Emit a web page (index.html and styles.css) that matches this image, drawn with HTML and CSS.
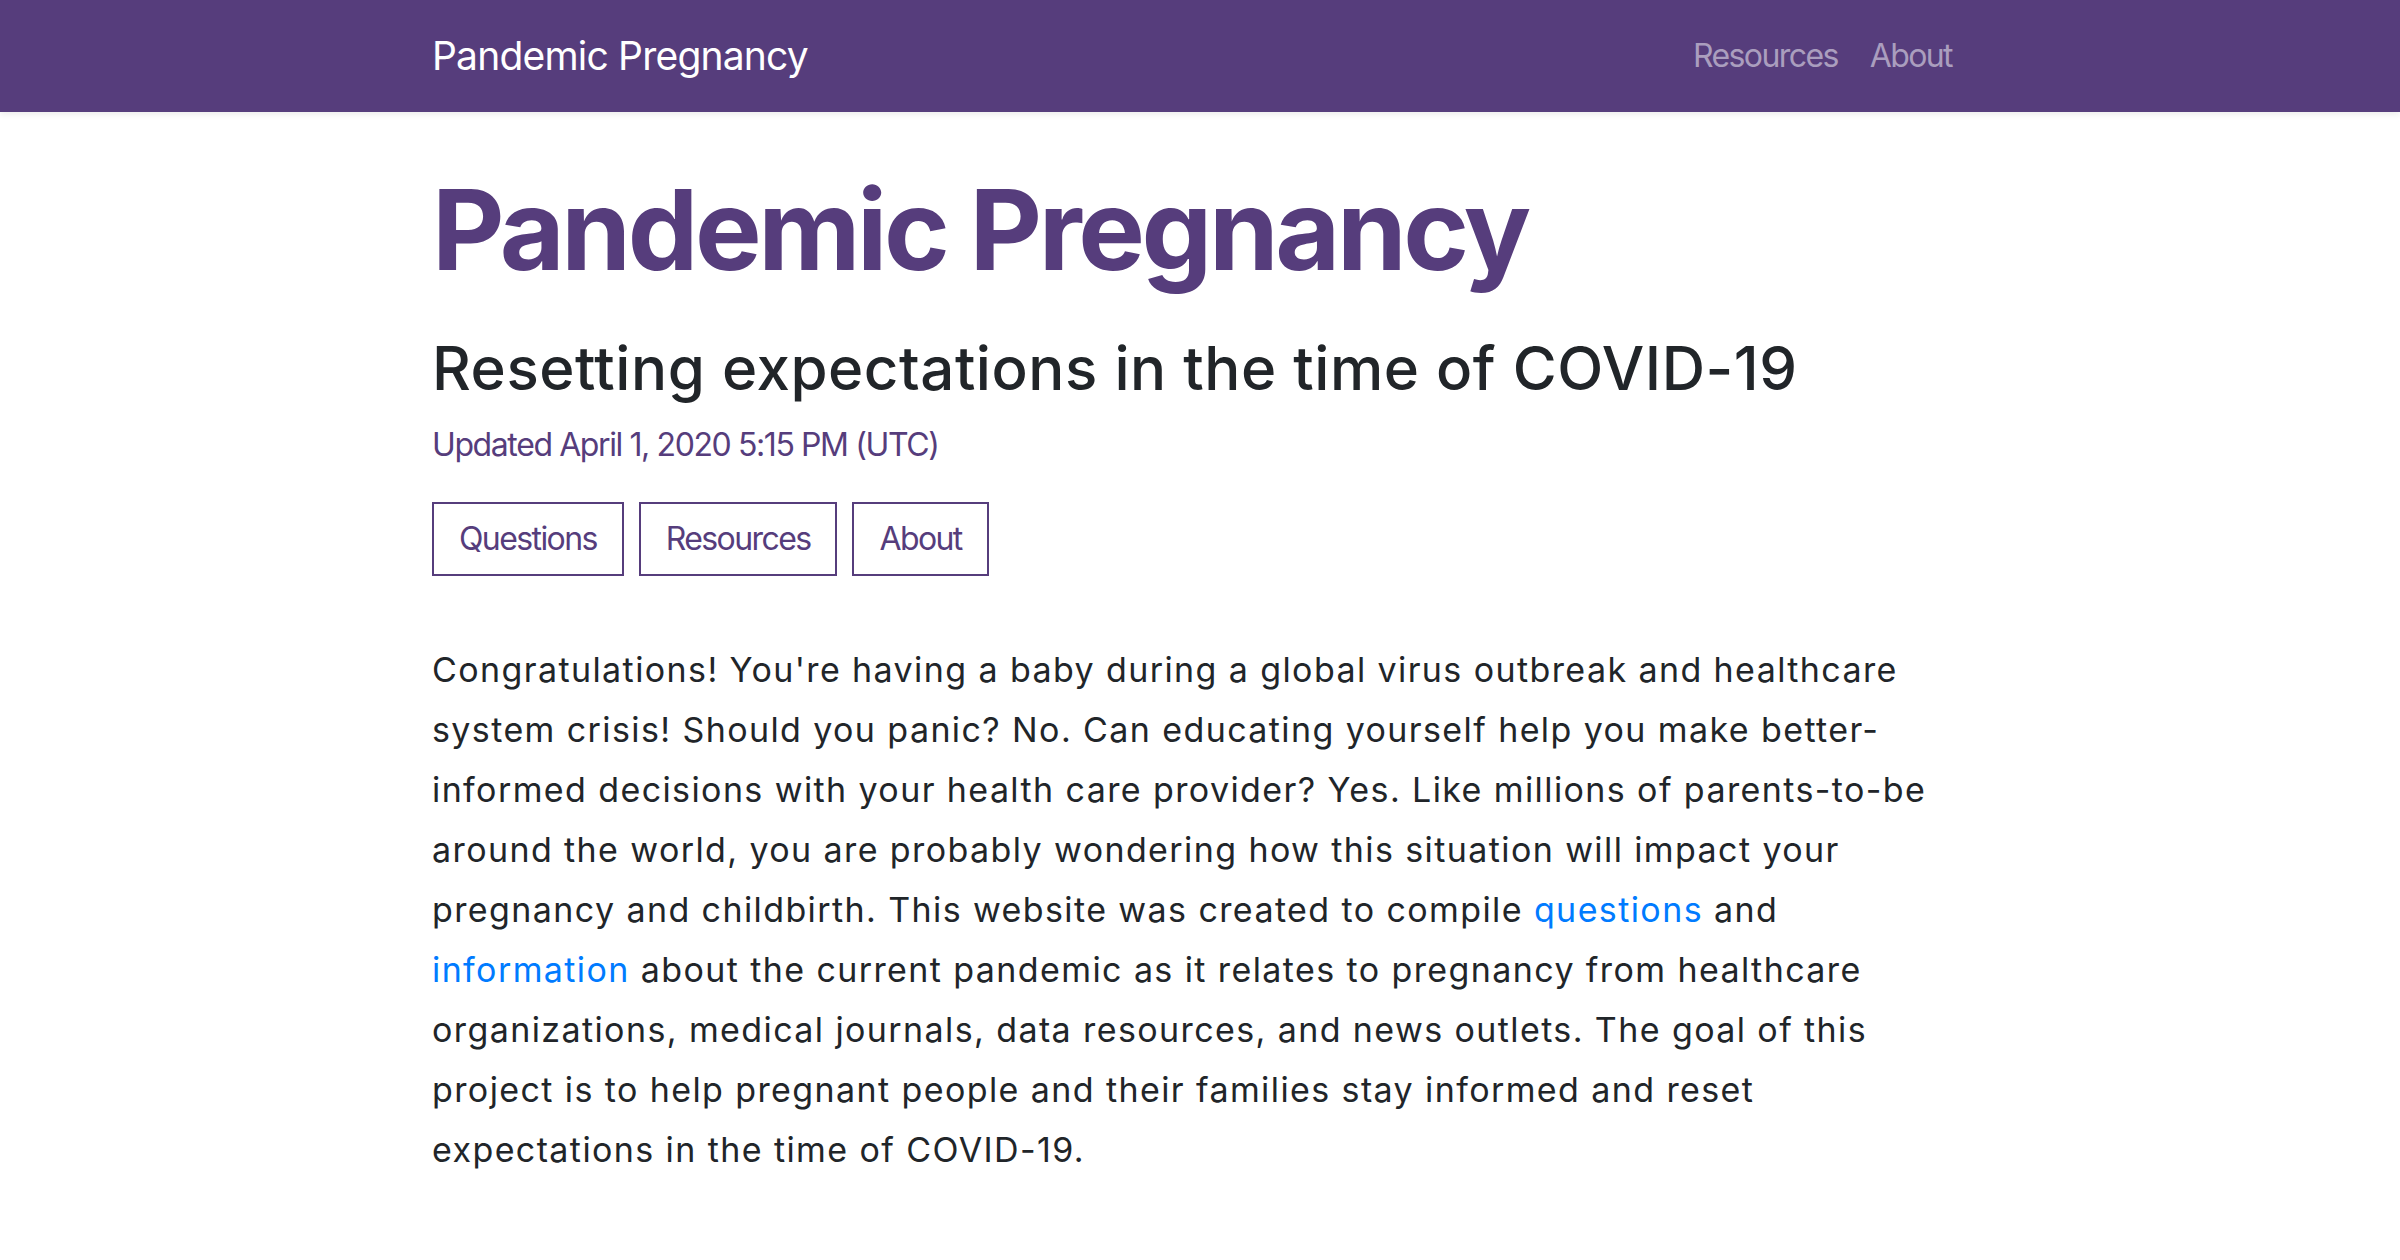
FILE: index.html
```html
<!DOCTYPE html>
<html lang="en">
<head>
<meta charset="utf-8">
<title>Pandemic Pregnancy</title>
<link rel="stylesheet" href="styles.css">
</head>
<body>
<header class="navbar">
  <div class="container nav-inner">
    <a class="brand" href="#">Pandemic Pregnancy</a>
    <nav class="nav-links">
      <a href="#">Resources</a>
      <a href="#">About</a>
    </nav>
  </div>
</header>
<main class="container main">
  <h1 class="title">Pandemic Pregnancy</h1>
  <h2 class="subtitle">Resetting expectations in the time of COVID-19</h2>
  <p class="updated">Updated April 1, 2020 5:15 PM (UTC)</p>
  <div class="buttons">
    <a class="btn" href="#">Questions</a>
    <a class="btn" href="#">Resources</a>
    <a class="btn" href="#">About</a>
  </div>
  <p class="intro">Congratulations! You're having a baby during a global virus outbreak and healthcare system crisis! Should you panic? No. Can educating yourself help you make better-informed decisions with your health care provider? Yes. Like millions of parents-to-be around the world, you are probably wondering how this situation will impact your pregnancy and childbirth. This website was created to compile <a href="#">questions</a> and <a href="#">information</a> about the current pandemic as it relates to pregnancy from healthcare organizations, medical journals, data resources, and news outlets. The goal of this project is to help pregnant people and their families stay informed and reset expectations in the time of COVID-19.</p>
</main>
</body>
</html>
```
FILE: styles.css
```css
* { box-sizing: border-box; }
html, body {
  margin: 0;
  padding: 0;
  background: #fff;
  font-family: Inter, "Noto Sans", "Liberation Sans", sans-serif;
  color: #212529;
}
a { text-decoration: none; }
.container {
  width: 1520px;
  margin-left: 432px;
}
.navbar {
  background: #563d7c;
  height: 112px;
  box-shadow: 0 3px 6px rgba(0, 0, 0, 0.07);
}
.nav-inner {
  height: 112px;
  display: flex;
  align-items: center;
  justify-content: space-between;
}
.brand {
  color: #fff;
  font-size: 39px;
  line-height: 60px;
  letter-spacing: -0.8px;
}
.nav-links {
  display: flex;
  gap: 32px;
}
.nav-links a {
  color: #aa9ebe;
  font-size: 32px;
  line-height: 48px;
  letter-spacing: -1.6px;
}
.main {
  padding-top: 50px;
}
.title {
  margin: 0;
  font-size: 112px;
  line-height: 134px;
  font-weight: 700;
  color: #563d7c;
  letter-spacing: -3.4px;
}
.subtitle {
  margin: 36px 0 0;
  font-size: 60px;
  line-height: 72px;
  font-weight: 500;
  color: #212529;
  letter-spacing: 0.55px;
}
.updated {
  margin: 17px 0 0;
  font-size: 32px;
  line-height: 48px;
  color: #563d7c;
  letter-spacing: -1.4px;
}
.buttons {
  display: flex;
  gap: 15px;
  margin-top: 33px;
}
.btn {
  display: block;
  border: 2px solid #563d7c;
  padding: 11px 25px;
  font-size: 32px;
  line-height: 48px;
  color: #563d7c;
  letter-spacing: -1.6px;
}
.intro {
  margin: 64px 0 0;
  font-size: 34px;
  line-height: 60px;
  letter-spacing: 1.4px;
  color: #212529;
}
.intro a { color: #007bff; }
```
